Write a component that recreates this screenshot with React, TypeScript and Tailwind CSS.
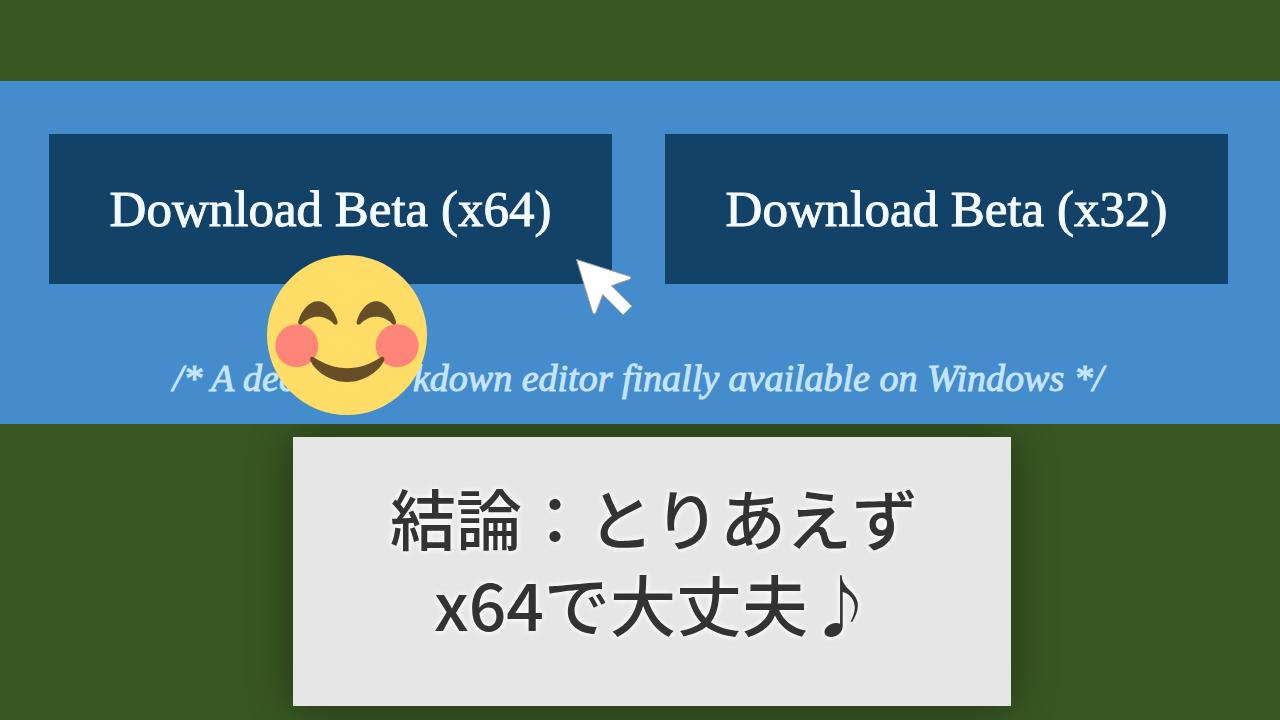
import type { ReactNode } from "react";

function SmileFace() {
  return (
    <svg viewBox="0 0 160 160" className="w-40 h-40" role="img" aria-label="Smiling face">
      <circle cx="80" cy="80" r="80" fill="#ffdd67" />
      <g fill="#ff8579">
        <circle cx="29.8" cy="90.7" r="21.5" />
        <circle cx="130.2" cy="90.7" r="21.5" />
      </g>
      <g fill="#664e27">
        <path d="M31.2 66.5C35 54 42.5 46.2 50.8 46.2S66.8 54 70.6 66.5C71.2 69 69 71 66.8 69C63 64.5 57 61.8 50.9 61.8S39 64.5 35 69C32.8 71 30.6 69 31.2 66.5Z" />
        <path d="M89.6 66.5C93.4 54 100.9 46.2 109.2 46.2S125.2 54 129 66.5C129.6 69 127.4 71 125.2 69C121.4 64.5 115.4 61.8 109.3 61.8S97.4 64.5 93.4 69C91.2 71 89 69 89.6 66.5Z" />
        <path d="M46.5 102.3C69 117 91.5 117 114 102.3C116.2 100.7 118.3 103 116.9 106C112.5 115.5 98 127 80.2 127S48 115.5 43.5 106C42.2 103 44.3 100.7 46.5 102.3Z" />
      </g>
    </svg>
  );
}

function Cursor() {
  return (
    <svg viewBox="0 0 60 60" className="w-[60px] h-[60px]" aria-hidden="true">
      <path
        d="M1.5 2.5L55 19.5Q57 20.8 55 22.3L36.5 28.8L57 49.2L48.2 58L27.8 37.5L20.8 56Q19 58.2 17.7 56Z"
        fill="#fff"
        stroke="#a09a98"
        strokeWidth="1"
        strokeLinejoin="round"
      />
    </svg>
  );
}

function DownloadButton({ children }: { children: ReactNode }) {
  return (
    <button
      type="button"
      className="w-full h-[150px] bg-[#134268] text-[#f4fbff] text-[51px] leading-none whitespace-nowrap [-webkit-text-stroke:1px_#f4fbff]"
    >
      {children}
    </button>
  );
}

export default function App() {
  return (
    <main className="min-h-screen bg-[#385723] pt-[81px] pb-3.5">
      <section className="relative z-10 bg-[#448ccb] pt-[53px] pb-6 font-['Liberation_Serif',serif]">
        <div className="flex gap-[53px] pl-[49px] pr-[52px]">
          <div className="relative z-10 flex-1">
            <DownloadButton>Download Beta (x64)</DownloadButton>
            <div className="absolute left-[218px] top-[121px]">
              <SmileFace />
            </div>
            <div className="absolute -right-[23px] top-[123px]">
              <Cursor />
            </div>
          </div>
          <div className="flex-1">
            <DownloadButton>Download Beta (x32)</DownloadButton>
          </div>
        </div>
        <p className="mt-[72px] pr-1 text-center text-[38px] leading-[44px] italic text-[#c5e5ff] whitespace-nowrap [-webkit-text-stroke:1px_#c5e5ff]">
          /* A decent markdown editor finally available on Windows */
        </p>
      </section>

      <div className="flex justify-center pl-6 pt-[13px]">
        <div className="w-[718px] bg-[#e6e6e6] pt-9 pb-[61px] pl-1 text-center shadow-[0_0_40px_rgba(0,0,0,0.4)]">
          <h1 className="font-['Noto_Sans_CJK_JP',sans-serif] text-[66px] leading-[86px] font-medium text-[#333] [text-shadow:0_0_6px_#fff,0_0_6px_#fff]">
            <span className="block">結論：とりあえず</span>
            <span className="block">x64で大丈夫♪</span>
          </h1>
        </div>
      </div>
    </main>
  );
}
